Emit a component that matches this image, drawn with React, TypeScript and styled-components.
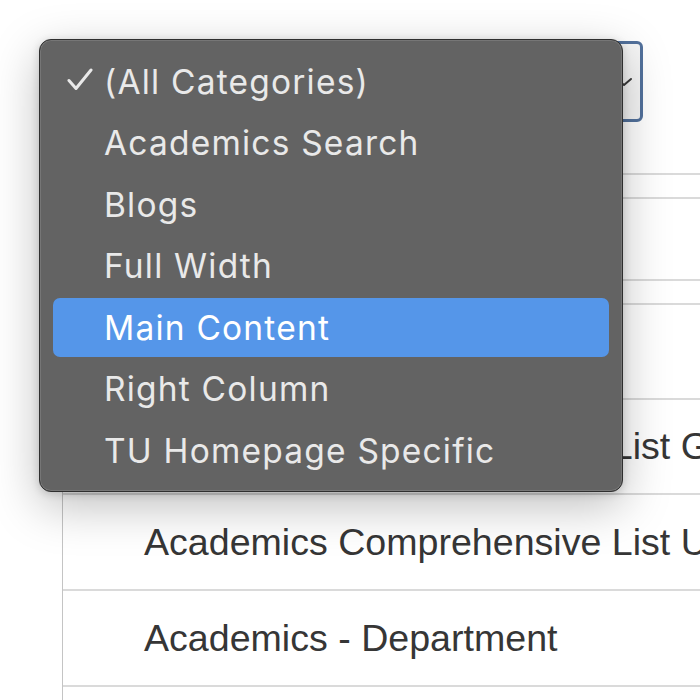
import React from "react";
import styled, { createGlobalStyle } from "styled-components";

const GlobalStyle = createGlobalStyle`
  html, body {
    margin: 0;
    padding: 0;
    background: #ffffff;
    overflow: hidden;
  }
  * { box-sizing: border-box; }
`;

const Page = styled.div`
  position: relative;
  width: 700px;
  height: 700px;
  overflow: hidden;
  background: #ffffff;
  padding-left: 62px;
  font-family: "Liberation Sans", Arial, sans-serif;
`;

const TopBar = styled.div`
  height: 173px;
  display: flex;
  justify-content: flex-end;
  align-items: flex-start;
  padding-top: 41px;
  padding-right: 57px;
`;

const SelectBox = styled.div`
  position: relative;
  width: 420px;
  height: 81px;
  border: 3px solid #52719c;
  border-radius: 6px;
  background: #f6f6f6;
  display: flex;
  align-items: center;
  justify-content: flex-end;
  padding-right: 7px;
`;

const Table = styled.div`
  border-left: 1px solid #c4c4c4;
  width: 900px;
`;

const Row = styled.div<{ $h: number }>`
  height: ${(p) => p.$h}px;
  border-top: 2px solid #dadada;
  display: flex;
  align-items: center;
  padding-left: 81px;
  font-size: 37.6px;
  color: #363636;
  white-space: nowrap;
`;

const Menu = styled.div`
  position: absolute;
  left: 39px;
  top: 39px;
  width: 584px;
  height: 453px;
  background: #636363;
  border: 1px solid #2f2f2f;
  border-radius: 12px;
  box-shadow: inset 0 0 0 1px rgba(255, 255, 255, 0.12),
    0 14px 48px rgba(0, 0, 0, 0.26), 0 2px 8px rgba(0, 0, 0, 0.16);
  padding: 12px 13px 11px;
  display: flex;
  flex-direction: column;
  gap: 2.5px;
  font-family: Inter, "Noto Sans", sans-serif;
`;

const Item = styled.div<{ $selected?: boolean }>`
  position: relative;
  height: 59px;
  flex: none;
  display: flex;
  align-items: center;
  padding-left: 51px;
  border-radius: 7px;
  font-size: 33.5px;
  letter-spacing: 1.2px;
  color: ${(p) => (p.$selected ? "#ffffff" : "#e9e9e9")};
  background: ${(p) => (p.$selected ? "#5596e9" : "transparent")};
`;

const Check = styled.svg`
  position: absolute;
  left: 14px;
  top: 50%;
  margin-top: -14px;
  width: 26px;
  height: 23px;
`;

const items = [
  "(All Categories)",
  "Academics Search",
  "Blogs",
  "Full Width",
  "Main Content",
  "Right Column",
  "TU Homepage Specific",
];

export default function App() {
  return (
    <>
      <GlobalStyle />
      <Page>
        <TopBar>
          <SelectBox>
            <svg width="18" height="10" viewBox="0 0 18 10">
              <path
                d="M2 2 L9 8 L16 2"
                fill="none"
                stroke="#3a3a3a"
                strokeWidth="2"
                strokeLinecap="round"
                strokeLinejoin="round"
              />
            </svg>
          </SelectBox>
        </TopBar>
        <Table>
          <Row $h={24} />
          <Row $h={82} />
          <Row $h={24} />
          <Row $h={95} />
          <Row $h={95}>Academics Comprehensive List Graduate</Row>
          <Row $h={96}>Academics Comprehensive List Undergraduate</Row>
          <Row $h={96}>Academics - Department</Row>
          <Row $h={96}>Academics - Programs</Row>
        </Table>
        <Menu>
          {items.map((label, i) => (
            <Item key={label} $selected={label === "Main Content"}>
              {i === 0 && (
                <Check viewBox="0 0 26 23">
                  <path
                    d="M2 12.5 L9 20.5 L24 2"
                    fill="none"
                    stroke="#e9e9e9"
                    strokeWidth="3"
                    strokeLinecap="round"
                    strokeLinejoin="round"
                  />
                </Check>
              )}
              {label}
            </Item>
          ))}
        </Menu>
      </Page>
    </>
  );
}
